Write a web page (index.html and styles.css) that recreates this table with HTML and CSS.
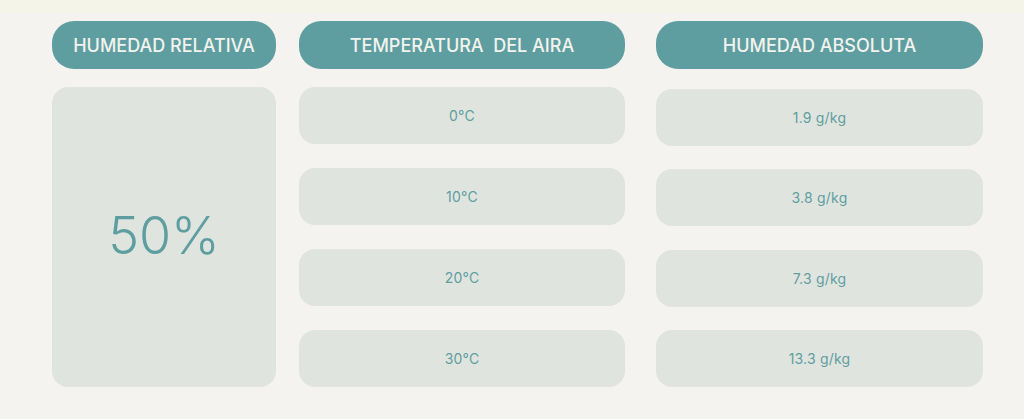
FILE: index.html
```html
<!DOCTYPE html>
<html lang="es">
<head>
<meta charset="utf-8">
<link rel="stylesheet" href="styles.css">
</head>
<body>
<div class="topband"></div>
<main class="board">
  <section class="col col-rel">
    <div class="pill">HUMEDAD RELATIVA</div>
    <div class="bigbox">50%</div>
  </section>
  <section class="col col-temp">
    <div class="pill">TEMPERATURA&nbsp; DEL AIRA</div>
    <div class="cells">
      <div class="cell">0°C</div>
      <div class="cell">10°C</div>
      <div class="cell">20°C</div>
      <div class="cell">30°C</div>
    </div>
  </section>
  <section class="col col-abs">
    <div class="pill">HUMEDAD ABSOLUTA</div>
    <div class="cells cells-abs">
      <div class="cell">1.9 g/kg</div>
      <div class="cell">3.8 g/kg</div>
      <div class="cell">7.3 g/kg</div>
      <div class="cell">13.3 g/kg</div>
    </div>
  </section>
</main>
</body>
</html>
```
FILE: styles.css
```css
* { box-sizing: border-box; }
html, body { margin: 0; padding: 0; }
body {
  background: #f5f3ef;
  width: 1024px;
  height: 419px;
  overflow: hidden;
  font-family: "Inter", "Noto Sans", sans-serif;
  color: #5f9ea0;
}
.topband {
  height: 13px;
  background: #f4f4e8;
}
.board {
  display: flex;
  padding: 8px 0 0 52px;
}
.col {
  display: flex;
  flex-direction: column;
}
.col-rel { width: 224px; }
.col-temp { width: 326px; margin-left: 23px; }
.col-abs { width: 327px; margin-left: 31px; }
.pill {
  height: 48px;
  border-radius: 22px;
  background: #5f9ea0;
  color: #f3f3ee;
  font-weight: 500;
  font-size: 18px;
  display: flex;
  align-items: center;
  justify-content: center;
  white-space: nowrap;
}
.bigbox {
  margin-top: 18px;
  height: 300px;
  border-radius: 16px;
  background: #dfe4df;
  display: flex;
  align-items: center;
  justify-content: center;
  font-size: 52px;
  font-weight: 300;
  padding-bottom: 4px;
}
.cells {
  margin-top: 18px;
  height: 300px;
  display: flex;
  flex-direction: column;
  justify-content: space-between;
}
.cells-abs {
  margin-top: 20px;
  height: 298px;
}
.cell {
  height: 57px;
  border-radius: 16px;
  background: #dfe4df;
  display: flex;
  align-items: center;
  justify-content: center;
  font-size: 14px;
  letter-spacing: 0.2px;
}
```
